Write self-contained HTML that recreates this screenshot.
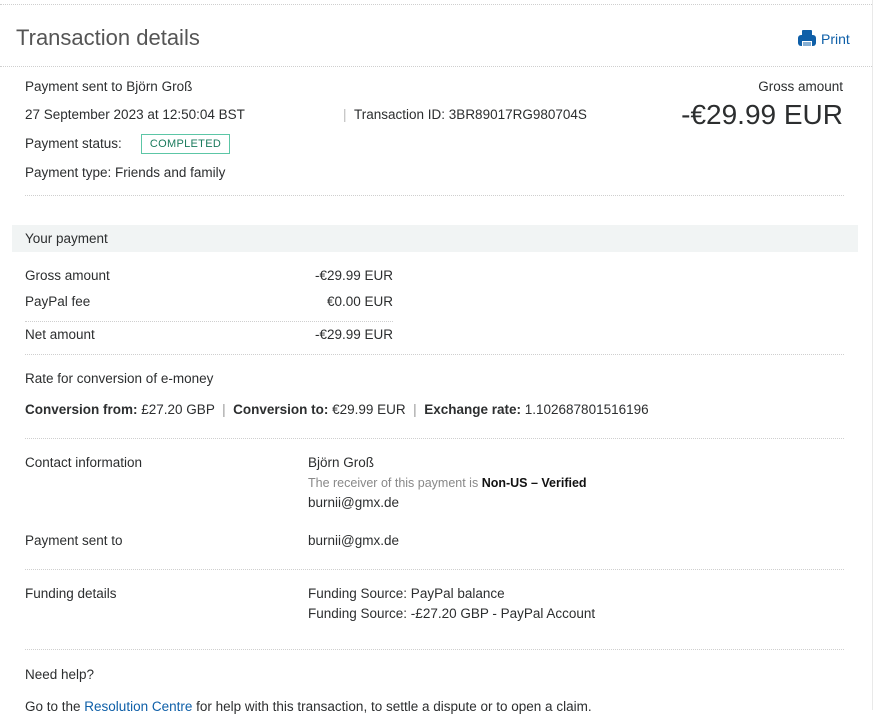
<!DOCTYPE html>
<html><head><meta charset="utf-8"><style>
*{margin:0;padding:0;box-sizing:border-box}
body{width:896px;height:710px;overflow:hidden;background:#fff;font-family:"Liberation Sans",sans-serif;color:#2c2e2f;font-size:13.5px;position:relative}
.a{position:absolute;white-space:nowrap}
.dl{position:absolute;height:0;border-top:1px dotted #cfcfcf}
b{font-weight:bold}
</style></head><body>
<div class="a" style="left:872px;top:0;width:24px;height:710px;background:#fff;border-left:1px solid #e9e9e9"></div>
<div class="dl" style="left:0;top:4px;width:872px"></div>
<div class="a" style="left:16px;top:25px;font-size:22px;color:#555">Transaction details</div>
<div class="a" style="left:797px;top:29px;width:20px;height:20px">
<svg width="20" height="20" viewBox="0 0 20 20"><rect x="5" y="1" width="10" height="6" rx="1" fill="#0e5fa8"/><rect x="1" y="6" width="18" height="11" rx="3" fill="#0e5fa8"/><rect x="5" y="12" width="10" height="6" fill="#fff"/><rect x="6" y="13" width="8" height="4" fill="#0e5fa8" opacity=".5"/></svg></div>
<div class="a" style="left:821px;top:31px;font-size:14px;color:#0e5fa8">Print</div>
<div class="dl" style="left:0;top:66px;width:872px"></div>
<div class="a" style="left:25px;top:79px">Payment sent to Björn Groß</div>
<div class="a" style="left:25px;top:107px">27 September 2023 at 12:50:04 BST</div>
<div class="a" style="left:343px;top:107px"><span style="color:#bbb">|</span>&nbsp;&nbsp;Transaction ID: 3BR89017RG980704S</div>
<div class="a" style="left:25px;top:136px">Payment status:</div>
<div class="a" style="left:141px;top:134px;width:89px;height:20px;border:1px solid #5cc6a6;color:#1a7a5c;font-size:11px;text-align:center;line-height:18px;letter-spacing:.3px">COMPLETED</div>
<div class="a" style="left:25px;top:165px">Payment type: Friends and family</div>
<div class="a" style="right:53px;top:79px">Gross amount</div>
<div class="a" style="right:53px;top:99px;font-size:28px;color:#2c2e2f">-€29.99 EUR</div>
<div class="dl" style="left:25px;top:195px;width:819px"></div>
<div class="a" style="left:12px;top:225px;width:846px;height:27px;background:#f1f4f4"></div>
<div class="a" style="left:25px;top:231px">Your payment</div>
<div class="a" style="left:25px;top:268px">Gross amount</div>
<div class="a" style="right:503px;top:268px">-€29.99 EUR</div>
<div class="a" style="left:25px;top:294px">PayPal fee</div>
<div class="a" style="right:503px;top:294px">€0.00 EUR</div>
<div class="dl" style="left:25px;top:321px;width:368px"></div>
<div class="a" style="left:25px;top:327px">Net amount</div>
<div class="a" style="right:503px;top:327px">-€29.99 EUR</div>
<div class="dl" style="left:25px;top:354px;width:819px"></div>
<div class="a" style="left:25px;top:371px">Rate for conversion of e-money</div>
<div class="a" style="left:25px;top:402px"><b>Conversion from:</b> £27.20 GBP <span style="color:#999">&nbsp;|&nbsp;</span> <b>Conversion to:</b> €29.99 EUR <span style="color:#999">&nbsp;|&nbsp;</span> <b>Exchange rate:</b> 1.102687801516196</div>
<div class="dl" style="left:25px;top:438px;width:819px"></div>
<div class="a" style="left:25px;top:455px">Contact information</div>
<div class="a" style="left:308px;top:455px">Björn Groß</div>
<div class="a" style="left:308px;top:476px;font-size:12.5px;color:#888">The receiver of this payment is <b style="color:#111">Non-US – Verified</b></div>
<div class="a" style="left:308px;top:495px">burnii@gmx.de</div>
<div class="a" style="left:25px;top:533px">Payment sent to</div>
<div class="a" style="left:308px;top:533px">burnii@gmx.de</div>
<div class="dl" style="left:25px;top:569px;width:819px"></div>
<div class="a" style="left:25px;top:586px">Funding details</div>
<div class="a" style="left:308px;top:586px">Funding Source: PayPal balance</div>
<div class="a" style="left:308px;top:606px">Funding Source: -£27.20 GBP - PayPal Account</div>
<div class="dl" style="left:25px;top:649px;width:819px"></div>
<div class="a" style="left:25px;top:667px">Need help?</div>
<div class="a" style="left:25px;top:699px">Go to the <span style="color:#0e5fa8">Resolution Centre</span> for help with this transaction, to settle a dispute or to open a claim.</div>
</body></html>
